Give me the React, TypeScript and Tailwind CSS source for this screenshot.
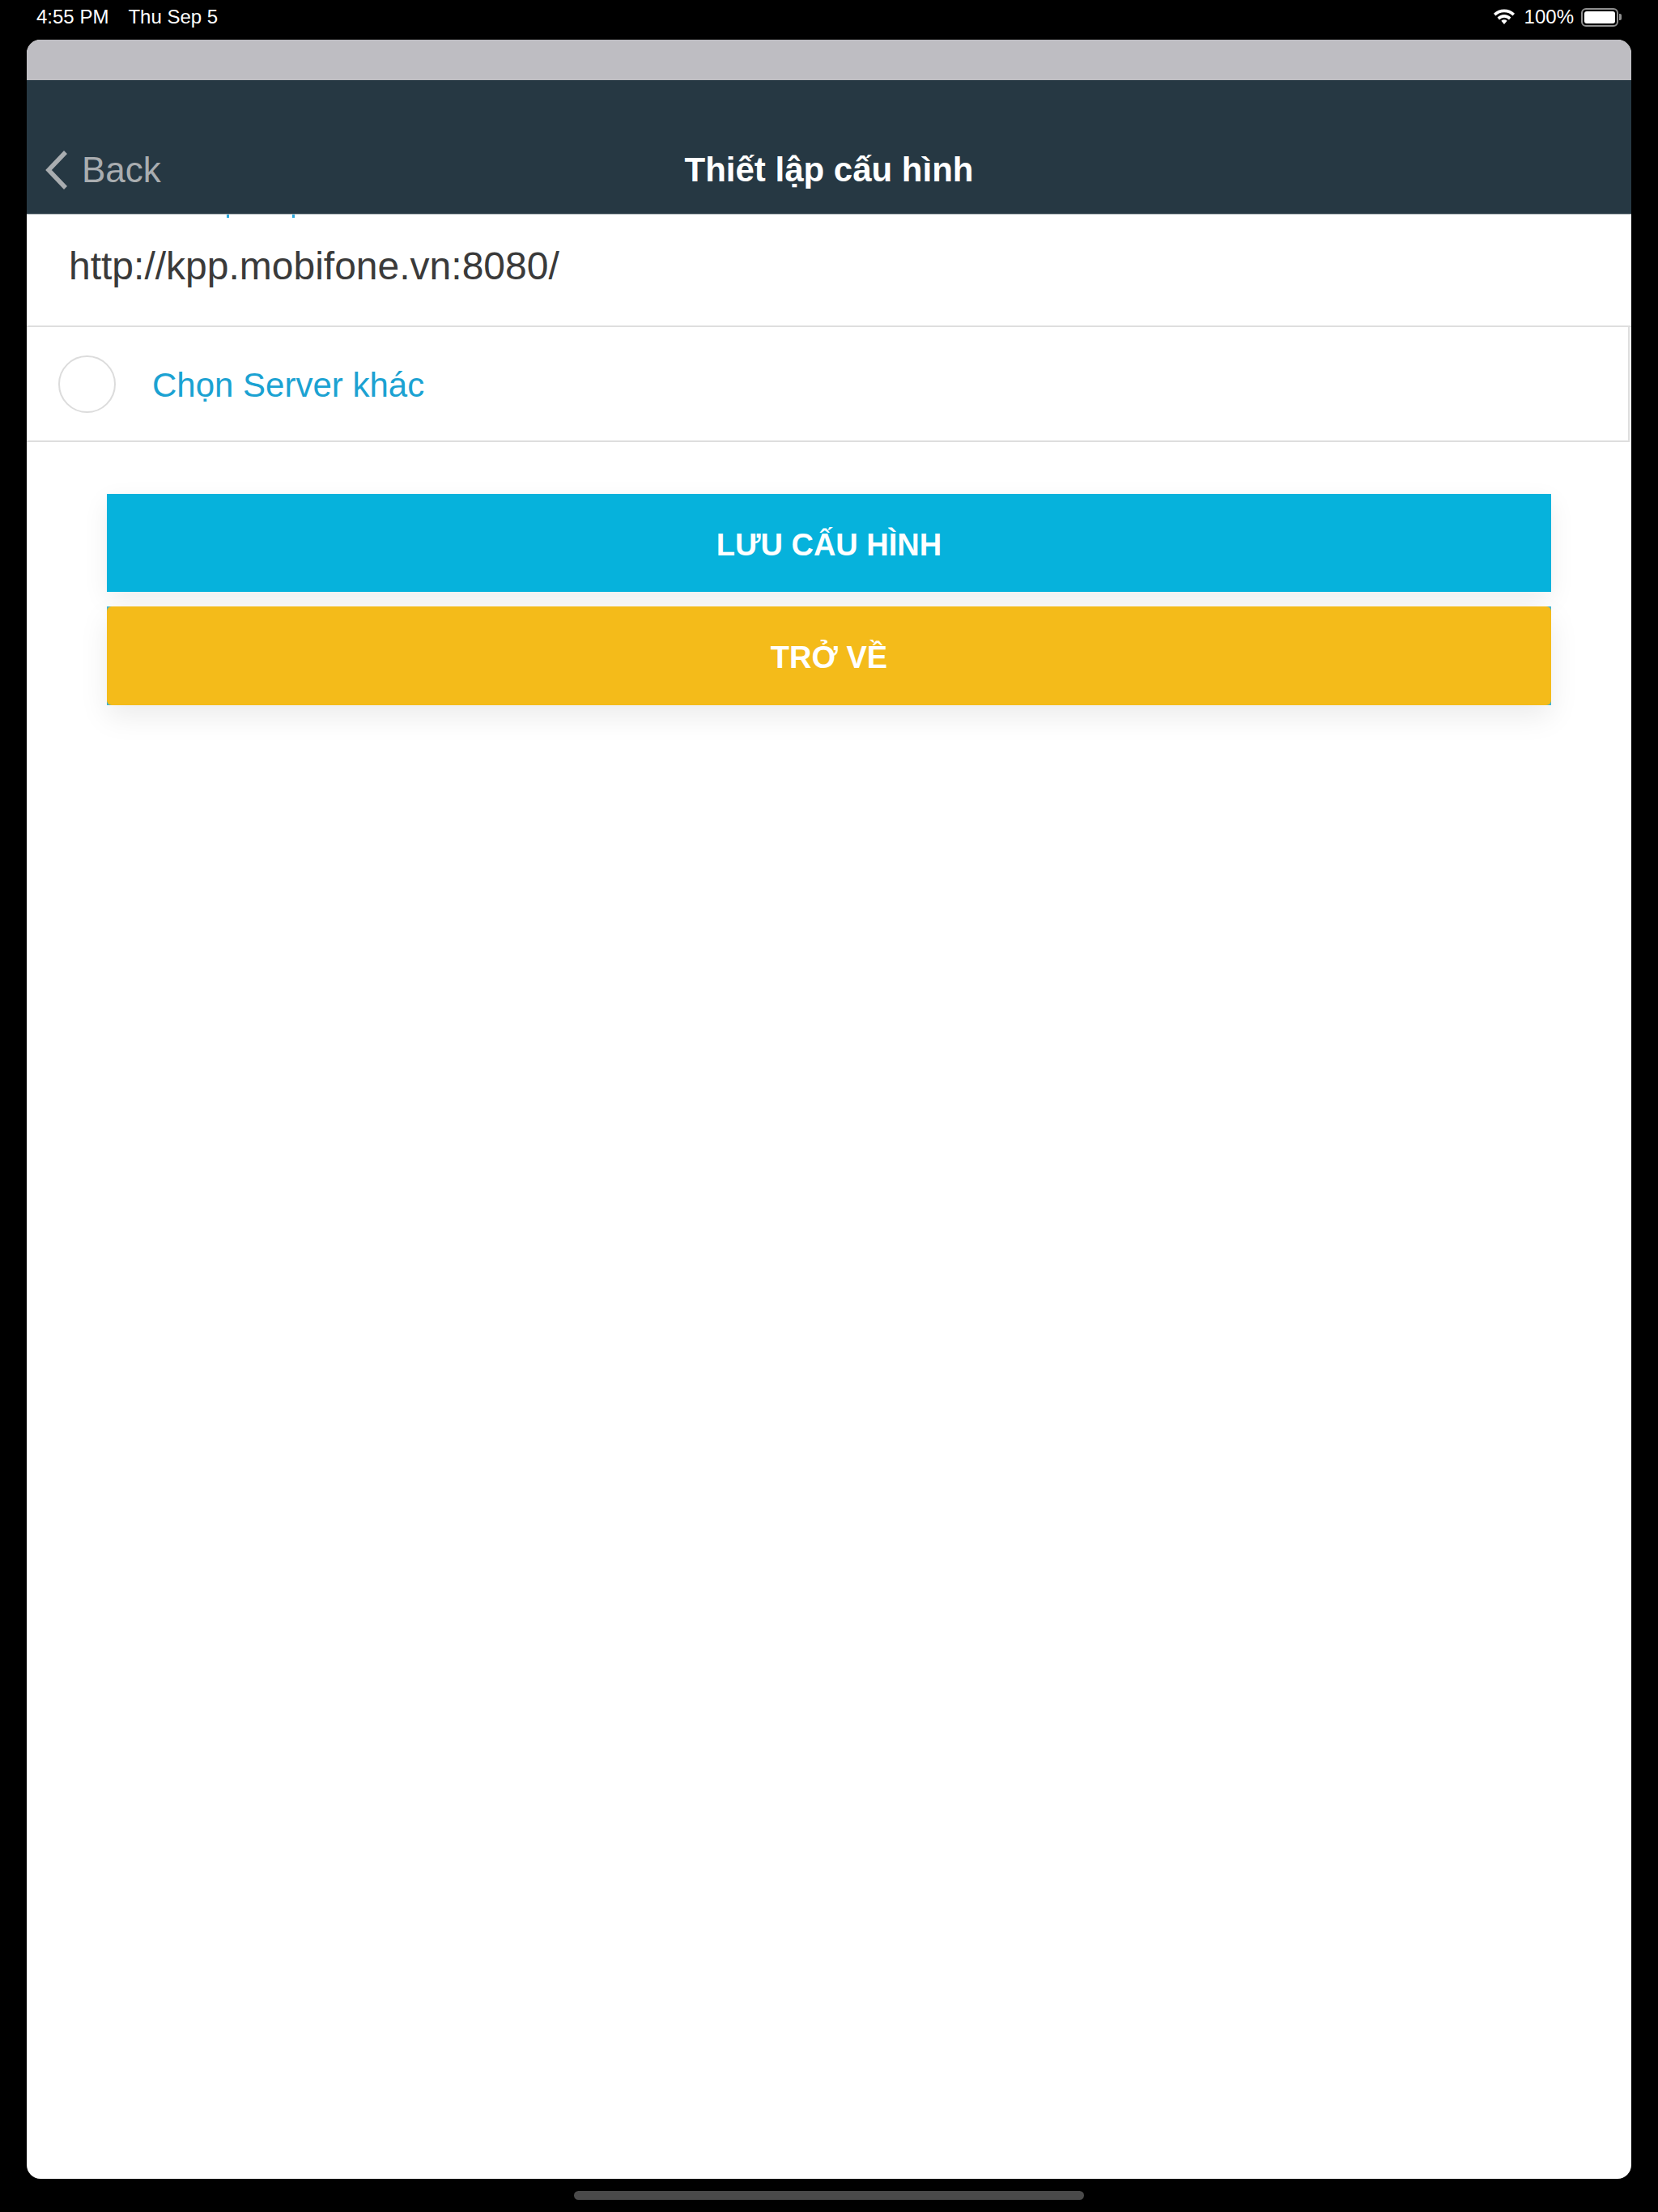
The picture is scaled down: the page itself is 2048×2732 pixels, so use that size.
import React from "react";

function StatusBar() {
  return (
    <div className="flex h-[49px] shrink-0 items-start justify-between pl-[45px] pr-[45px] pt-[9px] text-[24px] leading-[24px] text-white">
      <div className="flex">
        <span>4:55 PM</span>
        <span className="ml-[24px]">Thu Sep 5</span>
      </div>
      <div className="flex items-center">
        <svg width="28" height="20" viewBox="0 0 28 20" className="mr-[11px]">
          <path d="M14 19l3.6-4.2a5.2 5.2 0 0 0-7.2 0z" fill="white" />
          <path d="M5.6 10.6a11.8 11.8 0 0 1 16.8 0l-2.4 2.8a8 8 0 0 0-12 0z" fill="white" />
          <path d="M1 5.8a18.5 18.5 0 0 1 26 0l-2.4 2.8a14.8 14.8 0 0 0-21.2 0z" fill="white" />
        </svg>
        <span>100%</span>
        <div className="ml-[9px] flex items-center">
          <div className="flex h-[23px] w-[46px] items-center rounded-[6px] border-2 border-[#8f8f8f] p-[2px]">
            <div className="h-full w-full rounded-[3px] bg-white" />
          </div>
          <div className="ml-[1px] h-[8px] w-[3px] rounded-r-[2px] bg-[#8f8f8f]" />
        </div>
      </div>
    </div>
  );
}

function NavHeader() {
  return (
    <div className="h-[166px] shrink-0 border-b border-[#a9b0b4] bg-[#263843]">
      <div className="mt-[81px] grid h-[60px] grid-cols-[1fr_auto_1fr] items-center">
        <div className="flex items-center pl-[21px]">
          <svg width="32" height="50" viewBox="0 0 32 50">
            <polyline points="27,3 6,25 27,47" fill="none" stroke="#a9adb0" strokeWidth="5.5" />
          </svg>
          <span className="ml-[15px] text-[44px] leading-none text-[#a9adb0]">Back</span>
        </div>
        <div className="text-[42px] font-semibold leading-none text-white">Thiết lập cấu hình</div>
        <div />
      </div>
    </div>
  );
}

export default function App() {
  return (
    <div className="flex h-[2732px] w-[2048px] flex-col bg-black font-['Liberation_Sans',Arial,sans-serif]">
      <StatusBar />

      <div className="mx-[33px] flex h-[2642px] shrink-0 flex-col overflow-hidden rounded-[17px] bg-white">
        <div className="h-[50px] shrink-0 bg-[#bebdc2]" />
        <NavHeader />

        {/* server address row, its label scrolled up under the header */}
        <div className="h-[139px] shrink-0 border-b-2 border-[#dedede]">
          <div className="flex h-[4px]">
            <span className="ml-[247px] h-[4px] w-[3px] bg-[#2aa7dc]" />
            <span className="ml-[78px] h-[4px] w-[3px] bg-[#2aa7dc]" />
          </div>
          <div className="mt-[36px] pl-[52px] text-[48px] leading-none text-[#3a3a3a]">
            http://kpp.mobifone.vn:8080/
          </div>
        </div>

        <div className="mr-[2px] flex h-[142px] shrink-0 items-center border-r-2 border-b-2 border-[#dedede] pl-[39px]">
          <div className="h-[71px] w-[71px] rounded-full border-2 border-[#dcdcdc]" />
          <span className="ml-[45px] pt-[3px] text-[42px] leading-none text-[#1ba2d2]">Chọn Server khác</span>
        </div>

        <div className="mx-[99px] mt-[64px] flex flex-col gap-[18px]">
          <button className="flex h-[121px] items-center justify-center bg-[#06b2dc] pt-[5px] text-[38px] font-semibold text-white shadow-[0_10px_30px_rgba(0,0,0,0.07)]">
            LƯU CẤU HÌNH
          </button>
          <div className="h-[122px] bg-[#3fb3d3] shadow-[0_14px_34px_rgba(0,0,0,0.08)]">
            <button className="flex h-full w-full items-center justify-center rounded-[6px] bg-[#f4bb1a] pt-[5px] text-[38px] font-semibold text-white">
              TRỞ VỀ
            </button>
          </div>
        </div>
      </div>

      <div className="mx-auto mt-[15px] h-[11px] w-[630px] rounded-full bg-[#4a4a4a]" />
    </div>
  );
}
